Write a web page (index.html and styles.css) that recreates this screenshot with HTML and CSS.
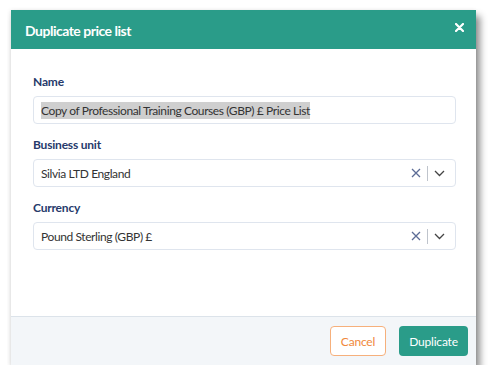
FILE: index.html
```html
<!DOCTYPE html>
<html lang="en">
<head>
  <meta charset="UTF-8" />
  <meta name="viewport" content="width=device-width, initial-scale=1.0" />
  <title>Duplicate price list</title>
  <link rel="stylesheet" href="styles.css">
</head>
<body>
  <div class="modal">
    <div class="modal-header">
      <span class="modal-title">Duplicate price list</span>
      <button class="close-btn" aria-label="Close">
        <svg width="9" height="9" viewBox="0 0 9 9"><path d="M1 1L8 8M8 1L1 8" stroke="#fff" stroke-width="2.2" stroke-linecap="round"/></svg>
      </button>
    </div>

    <div class="modal-body">
      <div class="field">
        <label class="field-label">Name</label>
        <div class="input">
          <span class="selected">Copy of Professional Training Courses (GBP) £ Price List</span>
        </div>
      </div>

      <div class="field">
        <label class="field-label">Business unit</label>
        <div class="input select">
          <span class="value">Silvia LTD England</span>
          <div class="select-icons">
            <svg class="clear" width="10" height="10" viewBox="0 0 10 10"><path d="M1 1L9 9M9 1L1 9" stroke="#5c6c96" stroke-width="1.3"/></svg>
            <span class="divider"></span>
            <svg class="chevron" width="11" height="7" viewBox="0 0 11 7"><path d="M1 1L5.5 5.5L10 1" fill="none" stroke="#444" stroke-width="1.3"/></svg>
          </div>
        </div>
      </div>

      <div class="field">
        <label class="field-label">Currency</label>
        <div class="input select">
          <span class="value">Pound Sterling (GBP) £</span>
          <div class="select-icons">
            <svg class="clear" width="10" height="10" viewBox="0 0 10 10"><path d="M1 1L9 9M9 1L1 9" stroke="#5c6c96" stroke-width="1.3"/></svg>
            <span class="divider"></span>
            <svg class="chevron" width="11" height="7" viewBox="0 0 11 7"><path d="M1 1L5.5 5.5L10 1" fill="none" stroke="#444" stroke-width="1.3"/></svg>
          </div>
        </div>
      </div>
    </div>

    <div class="modal-footer">
      <button class="btn btn-cancel">Cancel</button>
      <button class="btn btn-primary">Duplicate</button>
    </div>
  </div>
</body>
</html>
```

FILE: styles.css
```css
body {
  font-family: 'Lato', 'Noto Sans', sans-serif;
  margin: 0;
  padding: 10px 0 0 11px;
  background: #fff;
}
.modal {
  width: 465px;
  height: 355px;
  display: flex;
  flex-direction: column;
  background: #fff;
  box-shadow: 4px 6px 7px rgba(0,0,0,0.45), -1px 0 4px rgba(0,0,0,0.08);
}
.modal-header {
  height: 39px;
  background-color: #2a9c89;
  display: flex;
  align-items: center;
  justify-content: space-between;
  padding: 0 12px 0 14px;
  flex-shrink: 0;
}
.modal-title {
  color: #fff;
  font-size: 14px;
  font-weight: bold;
  letter-spacing: -0.5px;
  margin-top: 2px;
}
.close-btn {
  background: none;
  border: none;
  padding: 0;
  margin-top: -4px;
  display: flex;
  cursor: pointer;
}
.modal-body {
  flex: 1;
  padding: 25px 20px 0 22px;
}
.field {
  margin-bottom: 13px;
}
.field-label {
  display: block;
  font-size: 12px;
  line-height: 16px;
  font-weight: bold;
  letter-spacing: -0.2px;
  color: #263a6b;
  margin-bottom: 6px;
}
.input {
  height: 28px;
  box-sizing: border-box;
  border: 1px solid #dfe5ee;
  border-radius: 4px;
  display: flex;
  align-items: center;
  padding: 0 7px;
  font-size: 12px;
  letter-spacing: -0.4px;
  color: #333;
}
.selected {
  background: #cfcfcf;
  line-height: 17px;
}
.select .value {
  flex: 1;
}
.select-icons {
  display: flex;
  align-items: center;
  gap: 6px;
  margin-right: 3px;
}
.divider {
  width: 1px;
  height: 15px;
  background: #bfc4cc;
}
.modal-footer {
  height: 48px;
  flex-shrink: 0;
  background: #f3f6f9;
  border-top: 1px solid #dce3ea;
  display: flex;
  align-items: center;
  justify-content: flex-end;
  gap: 13px;
  padding-right: 8px;
}
.btn {
  height: 30px;
  border-radius: 4px;
  font-family: inherit;
  font-size: 12px;
  letter-spacing: -0.2px;
  cursor: pointer;
}
.btn-cancel {
  width: 56px;
  background: #fff;
  border: 1px solid #f6b07c;
  color: #f0883b;
}
.btn-primary {
  width: 69px;
  background: #2a9c89;
  border: none;
  color: #fff;
}
```
